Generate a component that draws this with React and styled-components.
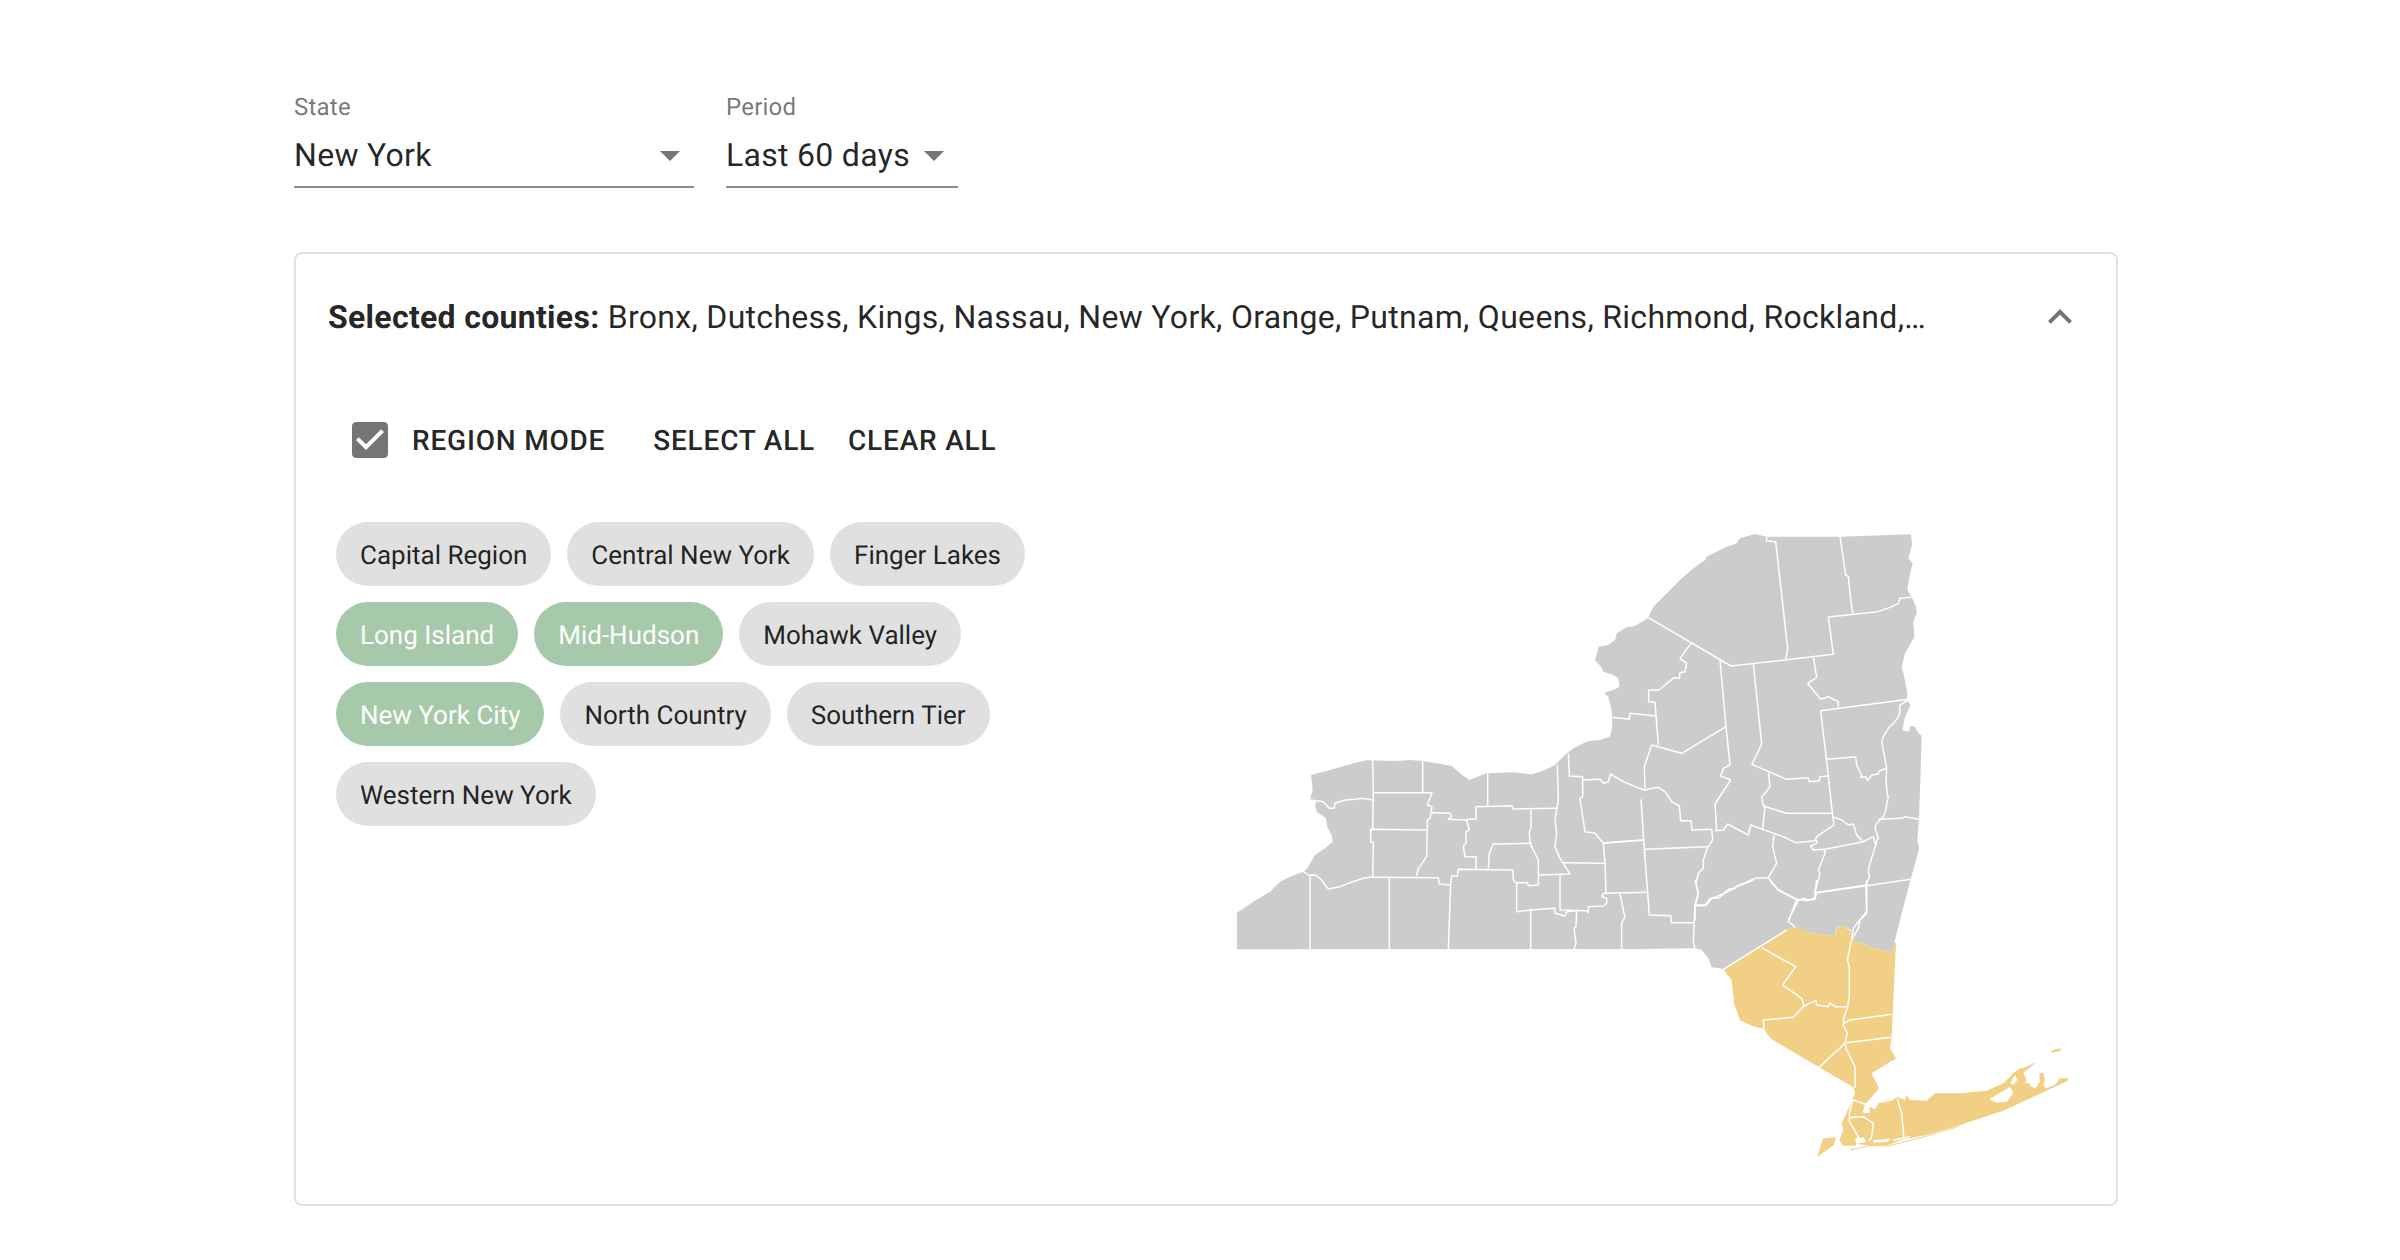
import React from "react";
import styled, { createGlobalStyle } from "styled-components";

const GlobalStyle = createGlobalStyle`
  body {
    margin: 0;
    background: #ffffff;
    font-family: Roboto, "Liberation Sans", sans-serif;
    color: rgba(0, 0, 0, 0.87);
    text-rendering: geometricPrecision;
  }
`;

const Page = styled.div`
  width: 1824px;
  padding: 92px 0 0 294px;
`;

const Filters = styled.div`
  display: flex;
  gap: 32px;
`;

const Field = styled.div`
  display: flex;
  flex-direction: column;
  width: ${(props) => props.width || "auto"};
`;

const FieldLabel = styled.label`
  height: 28px;
  line-height: 30px;
  font-size: 24px;
  letter-spacing: 0.22px;
  margin-bottom: 11px;
  color: rgba(0, 0, 0, 0.54);
`;

const Select = styled.div`
  display: flex;
  justify-content: space-between;
  align-items: center;
  padding-bottom: 7px;
  border-bottom: 2px solid #8c8c8c;
  font-size: 32px;
  letter-spacing: 0.3px;
  height: 48px;
`;

const Card = styled.div`
  margin-top: 64px;
  border: 2px solid #e0e0e0;
  border-radius: 8px;
  height: 950px;
`;

const CardHeader = styled.div`
  height: 126px;
  display: flex;
  align-items: center;
  justify-content: space-between;
  padding: 0 32px;
  font-size: 32px;
  letter-spacing: 0.3px;
`;

const Strong = styled.b`
  font-weight: 700;
`;

const CardBody = styled.div`
  display: flex;
  justify-content: space-between;
  padding-right: 16px;
`;

const LeftColumn = styled.div`
  width: 804px;
  padding-left: 40px;
`;

const Toolbar = styled.div`
  height: 120px;
  display: flex;
  align-items: center;
  padding-left: 10px;
`;

const ToolLabel = styled.span`
  font-size: 28px;
  font-weight: 500;
  letter-spacing: 0.8px;
  margin-left: ${(props) => props.offset};
`;

const Chips = styled.div`
  margin-top: 22px;
  display: flex;
  flex-wrap: wrap;
  gap: 16px;
  width: 764px;
`;

const Chip = styled.div`
  height: 64px;
  line-height: 68px;
  padding: 0 24px;
  border-radius: 32px;
  font-size: 26px;
  background: ${(props) => (props.selected ? "#a5c9a9" : "#e0e0e0")};
  color: ${(props) => (props.selected ? "#ffffff" : "rgba(0, 0, 0, 0.87)")};
`;

const MapFrame = styled.svg`
  display: block;
  width: 880px;
  height: 660px;
  margin-top: 140px;
  flex: none;
`;

const chips = [
  ["Capital Region"],
  ["Central New York"],
  ["Finger Lakes"],
  ["Long Island", true],
  ["Mid-Hudson", true],
  ["Mohawk Valley"],
  ["New York City", true],
  ["North Country"],
  ["Southern Tier"],
  ["Western New York"],
];

// the coordinates were read off crops of the picture, so each list has its own offset
const west = (p) => [p[0], p[1] + 660];
const north = (p) => [p[0] + 1140, p[1]];
const south = (p) => [p[0] + 1260, p[1] + 1080];
const nyc = (p) => [p[0] + 1770, p[1] + 1680];
const east = (p) => [p[0] + 2220, p[1] + 1530];

const toPath = (pts) => "M" + pts.map((p) => p.join(" ")).join("L");
const line = (shift, ...nums) => {
  const pts = [];
  for (let i = 0; i < nums.length; i += 2) pts.push(shift([nums[i], nums[i + 1]]));
  return toPath(pts);
};

const coast = [
  ...[[51,628],[51,518],[100,485],[150,455],[180,425],[215,408],[250,395],[262,385],[285,345],[315,325],[338,305],[335,285],[322,262],[318,235],[290,215],[285,195],[290,185],[270,180],[278,150],[273,105],[330,90],[400,70],[440,61],[530,63],[570,60],[608,63],[650,70],[695,78],[720,100],[748,120],[800,100],[880,97],[935,103],[975,90],[1005,75],[1020,60],[1040,40],[1060,25],[1100,5]].map(west),
  ...[[-25,662],[0,660],[30,650],[37,620],[35,570],[25,530],[12,518],[40,510],[58,500],[55,475],[40,465],[10,455],[3,440],[-15,420],[-4,380],[25,375],[45,360],[50,340],[80,322],[105,318],[145,293],[160,260],[190,230],[240,180],[280,145],[315,120],[320,110],[370,85],[410,70],[420,55],[465,42],[500,50],[720,50],[933,43],[936,75],[925,115],[938,130],[928,170],[922,210],[935,232],[948,260],[950,280],[940,305],[943,350],[915,400],[905,440],[915,480],[922,520],[920,540],[932,555],[915,590],[907,630],[925,635],[932,618],[945,620],[952,635],[965,648],[963,720],[957,895],[952,960],[958,985],[930,1085],[900,1200]].map(north),
  ...[[765,180],[755,217],[700,205],[635,178],[633,150],[605,138],[590,140],[585,168],[515,160],[465,140],[440,150],[250,268],[240,265],[215,262],[205,235],[185,210],[165,205],[0,207]].map(south),
];

const mainland = [[250,268],[440,150],[468,140],[515,160],[585,168],[592,140],[607,137],[635,155],[635,178],[700,205],[755,217],[762,188],[768,188],[755,470],[750,505],[768,535],[695,580],[717,625],[680,668],[672,676],[636,662],[645,640],[640,622],[537,562],[395,478],[380,460],[372,445],[360,445],[330,435],[300,420],[282,370],[275,300],[262,285]].map(south);

const longIsland = [
  ...[[128,58],[165,72],[158,98],[178,100],[180,92],[176,80],[195,88],[205,70],[245,62],[262,50],[285,60],[290,45],[300,60],[350,62],[375,40],[450,40]].map(nyc),
  ...[[0,190],[80,182],[130,160],[160,130],[175,118],[205,108],[228,95],[215,108],[190,128],[200,150],[195,160],[205,158],[215,170],[225,175],[240,155],[238,130],[250,128],[255,150],[250,165],[258,175],[285,165],[300,145],[325,145],[322,153],[135,240]].map(east),
  ...[[450,135],[350,165],[280,178],[235,195],[180,197],[145,192],[135,197],[100,198],[88,180],[100,150],[95,130]].map(nyc),
];

const islands = [
  [[40,175],[78,172],[72,195],[22,230],[30,205]].map(nyc),
  [[272,65],[285,58],[305,55],[300,62],[280,68]].map(east),
];

const bays = [
  [[88,208],[125,185],[135,180],[150,170],[160,190],[140,215],[110,218]].map(east),
  [[150,160],[165,135],[172,150],[160,165]].map(east),
  [[135,175],[160,172],[168,186],[140,192]].map(nyc),
  [[190,180],[225,178],[240,175],[235,185],[190,188]].map(nyc),
  [[250,178],[300,168],[300,172],[250,184]].map(nyc),
];

const countyLines = [
  line(north, 145,293,393,438,700,403,685,291,833,275,870,262,895,250,900,235,935,232),
  line(north, 500,50,500,63,527,65,563,385,558,417),
  line(north, 720,50,737,165,745,170,750,220,758,280),
  line(north, 273,370,240,415,260,430,255,455,240,458,238,475,222,473,177,510,146,510,146,545,165,547,175,675),
  line(north, 35,592,88,598,90,580,167,588),
  line(north, 135,805,133,740,155,675,245,700,378,620),
  line(north, 360,420,378,620,390,735,370,745,362,768,392,780,345,852,350,930),
  line(north, 460,432,485,672,456,733,560,778,625,773,628,785,658,782,660,770,685,768),
  line(north, 640,410,650,472,623,490,662,538,685,530,715,545,715,562),
  line(north, 925,538,662,572,685,768,697,880,702,915,650,950,645,962,587,968,550,950,488,928,452,915,445,945,383,912,370,930,345,932),
  line(north, 925,540,900,555,898,585,885,605,865,625,850,650,845,665,860,745),
  line(north, 680,718,767,710,770,735,785,765,782,772,797,770,803,782,815,765,835,762,838,752,860,745,858,780,862,825,865,830,855,880,850,890,830,910,825,925,835,955,825,970,820,950,790,965,770,945,760,912,745,915,725,900,702,892),
  line(north, 835,898,905,895,915,890,957,898),
  line(north, 505,758,510,800,495,820,485,830,490,858,560,880,697,880),
  line(north, 495,858,488,928),
  line(north, 105,800,133,810,175,802,195,815,215,845,238,858,242,902,273,902,276,930,335,928,338,960,322,985,310,1020,310,1045,295,1060,288,1090,295,1120,285,1160,285,1200),
  line(north, 123,838,133,988,148,1185,212,1187,214,1208,280,1208),
  line(north, 133,988,322,980),
  line(north, 12,968,130,960),
  line(north, 285,1157,315,1157,330,1135,355,1135,385,1108,405,1105,410,1098,430,1090,465,1075,505,1073),
  line(north, 522,945,518,980,530,1030,505,1073,535,1110,595,1142,565,1200),
  line(north, 595,1142,610,1135,625,1140,645,1138,650,1118,800,1097,932,1078),
  line(north, 645,1118,660,1060,655,1050,675,1000,675,988,640,990,632,978,650,970,650,960),
  line(north, 675,988,790,965),
  line(north, 830,965,810,1030,805,1050,808,1070,798,1095,800,1180,780,1200,775,1225,755,1258),
  line(west, 458,61,460,158,458,268),
  line(west, 460,158,636,158,622,195,636,200,630,235,622,240,620,350,610,365,595,385,590,408),
  line(west, 608,63,608,158),
  line(west, 636,218,690,220,695,230,685,238,740,240,748,270,738,275,738,310,730,318,735,350,768,350,768,388),
  line(west, 740,238,768,238,768,200,875,197,880,207,1010,205),
  line(west, 803,100,803,198),
  line(west, 1012,75,1015,180,1005,240,1010,280,1005,320,1020,355,1050,402,955,405),
  line(west, 933,210,933,265,928,275,930,310,945,340,955,360,955,435,925,437,922,428,888,428,880,420,878,390,715,388,712,408,695,408,692,430,685,628),
  line(west, 935,310,820,312,808,340,805,388),
  line(west, 618,270,452,268,452,305,460,308,458,410,430,415,385,430,360,440,325,447,300,415,285,405,265,405,250,395),
  line(west, 458,412,655,413,658,432,692,435),
  line(west, 270,180,310,185,328,205,342,205,345,190,375,180,405,178,425,175,458,180),
  line(west, 270,405,270,628),
  line(west, 508,415,508,628),
  line(west, 1045,40,1048,108,1088,110,1088,170,1080,175,1085,210,1095,275,1125,280,1150,310,1155,370,1158,460),
  line(west, 1088,120,1140,118,1150,130,1165,125,1172,102,1210,125,1245,140),
  line(west, 1152,310,1270,300),
  line(west, 1028,368,1155,370),
  line(west, 1020,405,1020,510,1100,512,1105,518,1105,500,1150,498,1160,490,1160,475,1145,470,1150,460,1280,457),
  line(west, 890,428,890,515,932,510,1005,505,1005,520,1035,528,1040,515,1070,512,1068,560,1062,565,1068,610,1062,628),
  line(west, 932,510,932,628),
  line(west, 1200,460,1210,510,1215,530,1205,550,1205,628),
  line(south, 470,58,445,125,465,140),
  line(south, 470,58,500,62,525,55,525,38,680,15),
  line(south, 530,0,525,38),
  line(south, 680,0,680,95,655,125,640,145,635,178),
  line(south, 165,0,175,40,165,75,200,75,215,55,265,35,290,20,330,5,340,0),
  line(south, 388,0,415,30,470,58),
  line(south, 165,75,160,185,165,205),
  line(south, 250,268,440,150),
  line(south, 365,203,467,260,428,315,485,355,492,378,528,362,530,375,565,380,570,368,585,380,622,380),
  line(south, 492,378,460,412,370,420,372,445),
  line(south, 635,178,622,240,628,260,628,350,622,385,612,410,610,435,622,460,615,490,620,510,645,560,645,625),
  line(south, 615,490,537,562),
  line(south, 612,430,630,420,755,403),
  line(south, 620,488,752,472),
  line(nyc, 128,60,165,72),
  line(nyc, 128,60,118,100,118,125,145,170,140,195),
  line(nyc, 118,118,125,112,160,110,190,130,185,170,178,182),
  line(nyc, 262,55,275,100,282,178),
];

const StateMap = () => (
  <MapFrame viewBox="0 0 2640 1980">
    <path d={toPath(coast) + "Z"} fill="#cccccc" />
    <path d={toPath(mainland) + "Z"} fill="#f1cf85" />
    <path d={toPath(longIsland) + "Z"} fill="#f1cf85" />
    {islands.map((pts, i) => (
      <path key={i} d={toPath(pts) + "Z"} fill="#f1cf85" />
    ))}
    {bays.map((pts, i) => (
      <path key={i} d={toPath(pts) + "Z"} fill="#ffffff" />
    ))}
    <path
      d={line(nyc, 120,210,180,197,235,198,350,168,450,138)}
      fill="none"
      stroke="#f1cf85"
      strokeWidth="3"
    />
    <g fill="none" stroke="#ffffff" strokeWidth="4.5" strokeLinejoin="round">
      {countyLines.map((d, i) => (
        <path key={i} d={d} />
      ))}
    </g>
  </MapFrame>
);

const ArrowDrop = () => (
  <svg width="48" height="48" viewBox="0 0 24 24" fill="#757575">
    <path d="M7 10l5 5 5-5z" />
  </svg>
);

const App = () => {
  return (
    <Page>
      <GlobalStyle />
      <Filters>
        <Field width="400px">
          <FieldLabel>State</FieldLabel>
          <Select>
            New York
            <ArrowDrop />
          </Select>
        </Field>
        <Field>
          <FieldLabel>Period</FieldLabel>
          <Select>
            Last 60 days
            <ArrowDrop />
          </Select>
        </Field>
      </Filters>
      <Card>
        <CardHeader>
          <span>
            <Strong>Selected counties:</Strong> Bronx, Dutchess, Kings, Nassau, New York, Orange,
            Putnam, Queens, Richmond, Rockland,…
          </span>
          <svg width="48" height="48" viewBox="0 0 24 24" fill="#757575">
            <path d="M12 8l-6 6 1.41 1.41L12 10.83l4.59 4.58L18 14z" />
          </svg>
        </CardHeader>
        <CardBody>
          <LeftColumn>
            <Toolbar>
              <svg width="48" height="48" viewBox="0 0 24 24" fill="#757575">
                <path d="M19 3H5c-1.11 0-2 .9-2 2v14c0 1.1.89 2 2 2h14c1.1 0 2-.9 2-2V5c0-1.1-.9-2-2-2zm-9 14l-5-5 1.41-1.41L10 14.17l7.59-7.59L19 8l-9 9z" />
              </svg>
              <ToolLabel offset="18px">REGION MODE</ToolLabel>
              <ToolLabel offset="48px">SELECT ALL</ToolLabel>
              <ToolLabel offset="33px">CLEAR ALL</ToolLabel>
            </Toolbar>
            <Chips>
              {chips.map(([name, selected]) => (
                <Chip key={name} selected={selected}>
                  {name}
                </Chip>
              ))}
            </Chips>
          </LeftColumn>
          <StateMap />
        </CardBody>
      </Card>
    </Page>
  );
};

export default App;
